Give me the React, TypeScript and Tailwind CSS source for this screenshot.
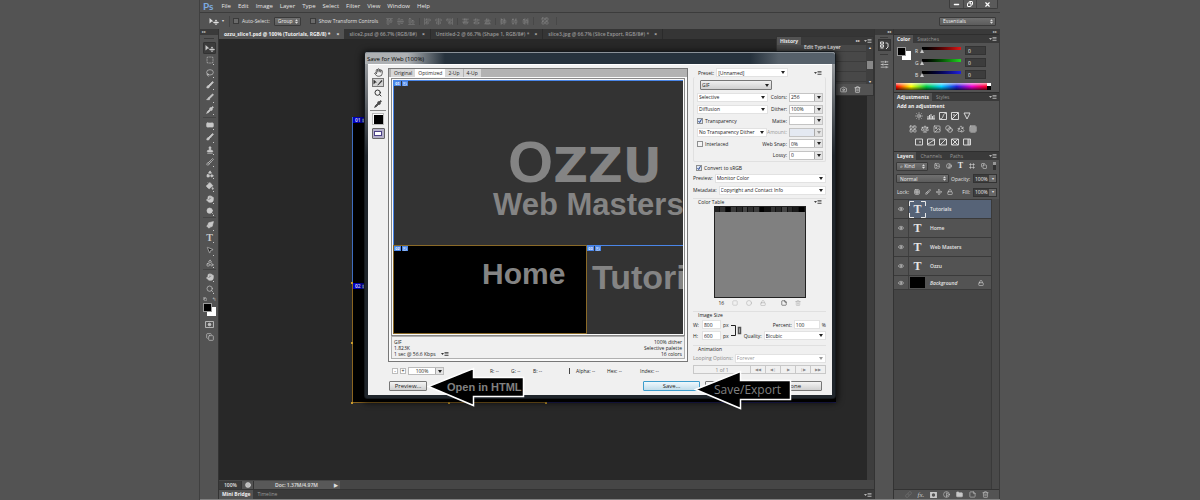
import type { ReactNode } from "react";
import type { LucideIcon } from "lucide-react";
import {
  AlignCenterHorizontal,
  AlignCenterVertical,
  AlignEndHorizontal,
  AlignEndVertical,
  AlignHorizontalDistributeCenter,
  AlignHorizontalDistributeEnd,
  AlignHorizontalDistributeStart,
  AlignStartHorizontal,
  AlignStartVertical,
  AlignVerticalDistributeCenter,
  AlignVerticalDistributeEnd,
  AlignVerticalDistributeStart,
  Bandage,
  Blend,
  Brush,
  Camera,
  Circle,
  Contrast,
  Copy,
  Eye,
  Folder,
  Frame,
  Grid3x3,
  Hand,
  Image,
  LayoutGrid,
  Lasso,
  Link,
  Lock,
  Minus,
  MousePointer2,
  Move,
  PaintBucket,
  PenTool,
  Pipette,
  Recycle,
  Scale,
  Search,
  Shapes,
  SlidersHorizontal,
  Slice,
  SquareDashed,
  Stamp,
  StickyNote,
  Sun,
  Trash2,
  X,
} from "lucide-react";

const menus = ["File", "Edit", "Image", "Layer", "Type", "Select", "Filter", "View", "Window", "Help"];

const documents = [
  "slice2.psd @ 66.7% (RGB/8#)",
  "Untitled-2 @ 66.7% (Shape 1, RGB/8#) *",
  "slice3.jpg @ 66.7% (Slice Export, RGB/8#) *",
];

const alignGroups: LucideIcon[][] = [
  [AlignStartHorizontal, AlignCenterHorizontal, AlignEndHorizontal],
  [AlignStartVertical, AlignCenterVertical, AlignEndVertical],
  [AlignVerticalDistributeStart, AlignVerticalDistributeCenter, AlignVerticalDistributeEnd],
  [AlignHorizontalDistributeStart, AlignHorizontalDistributeCenter, AlignHorizontalDistributeEnd],
];

const colorAdjustments: LucideIcon[] = [LayoutGrid, Scale, Image, Blend, Recycle, Grid3x3];

const layers = ["Tutorials", "Home", "Web Masters", "Ozzu"];

const swatches = [
  "#222", "#333", "#050505", "#3a3a3a", "#2a2a2a", "#444", "#303030", "#3c3c3c",
  "#000", "#111", "#333", "#282828", "#444", "#2c2c2c", "#1a1a1a", "#000",
];

function MenuGlyph({ className = "text-[#b5b5b5]" }: { className?: string }) {
  return (
    <svg viewBox="0 0 8 6" className={`h-[6px] w-[8px] shrink-0 ${className}`} fill="currentColor">
      <path d="M0 2h3L1.500 4zM3.500 1h4v.7h-4zM3.500 2.500h4v.7h-4zM3.500 4h4v.7h-4z" />
    </svg>
  );
}

function MoveGlyph() {
  return (
    <svg viewBox="0 0 20 14" className="h-[7px] w-[10px]" fill="currentColor">
      <path d="M1 0l8 7H5.500L1 11z" />
      <path d="M14 3l2.500 3H15v2h2V6.500L20 9l-3 2.500V10h-2v2h1.500L14 14l-2.500-2H13v-2h-2v1.500L8 9l3-2.500V8h2V6h-1.500z" />
    </svg>
  );
}

function Tool({ label, children }: { label: string; children: ReactNode }) {
  return (
    <button aria-label={label} className="relative flex flex-1 items-center justify-center">
      {children}
      <span className="absolute right-[2px] bottom-[1px] size-[1px] bg-[#c8c8c8]" />
    </button>
  );
}

function ToolGroup({ tools, className }: { tools: [string, LucideIcon, boolean?][]; className: string }) {
  return (
    <div className={`flex flex-col ${className}`}>
      {tools.map(([label, Icon, solid]) => (
        <Tool key={label} label={label}>
          <Icon className={`size-[8px] ${solid ? "fill-[#c8c8c8]" : ""}`} strokeWidth={2} />
        </Tool>
      ))}
    </div>
  );
}

function Toolbar() {
  return (
    <aside className="flex w-[19px] shrink-0 flex-col border-r border-[#333] text-[#c8c8c8]">
      <div className="h-[6px] bg-[#3a3a3a] pl-[2px] text-[4px] leading-[5px]">▸▸</div>
      <div className="mx-[4px] my-[3px] h-px bg-[#3a3a3a]" />
      <div className="mr-[2px] ml-[3px] flex flex-col">
        <button aria-label="Move tool" className="flex h-[12px] items-center justify-center rounded-[1px] border border-[#333] bg-[#3c3c3c]">
          <MoveGlyph />
        </button>
        <ToolGroup
          className="h-[62px]"
          tools={[
            ["Marquee tool", SquareDashed],
            ["Lasso tool", Lasso],
            ["Quick selection tool", Brush, true],
            ["Slice tool", Slice, true],
            ["Eyedropper tool", Pipette, true],
          ]}
        />
        <div className="my-px h-px bg-[#444]" />
        <ToolGroup
          className="h-[98px]"
          tools={[
            ["Healing brush tool", Bandage, true],
            ["Brush tool", Brush, true],
            ["Clone stamp tool", Stamp, true],
            ["History brush tool", Brush],
            ["Eraser tool", Shapes, true],
            ["Paint bucket tool", PaintBucket, true],
            ["Smudge tool", Hand, true],
            ["Dodge tool", Search, true],
          ]}
        />
        <div className="mb-px h-px bg-[#444]" />
        <div className="flex h-[50px] flex-col">
          <Tool label="Pen tool">
            <PenTool className="size-[8px] -scale-x-100 fill-[#c8c8c8]" />
          </Tool>
          <Tool label="Type tool">
            <span className="font-['Liberation_Serif',serif] text-[10px] leading-[12px] font-bold">T</span>
          </Tool>
          <Tool label="Path selection tool">
            <MousePointer2 className="size-[8px] fill-[#222]" />
          </Tool>
          <Tool label="Shape tool">
            <Shapes className="size-[8px]" />
          </Tool>
        </div>
        <div className="mb-px h-px bg-[#444]" />
        <ToolGroup
          className="h-[24px]"
          tools={[
            ["Hand tool", Hand, true],
            ["Zoom tool", Search],
          ]}
        />
        <div className="flex h-[7px] items-center justify-between">
          <Copy className="size-[4px]" strokeWidth={3} />
          <span className="text-[5px] leading-[6px]">↰</span>
        </div>
        <div className="grid h-[14px] grid-cols-[4px_5px_4px] grid-rows-[4px_5px_4px] pt-px">
          <span className="z-10 col-span-2 col-start-1 row-span-2 row-start-1 border border-[#999] bg-black" />
          <span className="col-span-2 col-start-2 row-span-2 row-start-2 bg-white" />
        </div>
        <div className="mt-[4px] flex h-[8px] items-center justify-center">
          <svg viewBox="0 0 10 8" className="h-[7px] w-[9px]" fill="none" stroke="currentColor">
            <path d="M.500.500h9v7h-9z" />
            <circle cx="5" cy="4" r="1.500" fill="currentColor" />
          </svg>
        </div>
        <div className="mt-[5px] flex h-[8px] items-center justify-center">
          <Copy className="size-[8px]" />
        </div>
      </div>
    </aside>
  );
}

function MenuBar() {
  return (
    <header className="flex h-[12px] items-center pl-[3px]">
      <span className="mr-[8px] font-[Lato] text-[10px] leading-[12px] font-bold text-[#7cabe0]">Ps</span>
      <nav className="flex gap-[7px] text-[6px] leading-[8px] text-[#e6e6e6]">
        {menus.map((menu) => (
          <button key={menu}>{menu}</button>
        ))}
      </nav>
      <div className="mr-[2px] ml-auto flex h-[9px] self-start rounded-b-[2px] border border-t-0 border-[#3c3c3c] bg-[#5a5a5a] text-white">
        <button aria-label="Minimize" className="flex w-[14px] items-center justify-center border-r border-[#444]">
          <Minus className="size-[7px]" strokeWidth={5} />
        </button>
        <button aria-label="Restore" className="flex w-[13px] items-center justify-center border-r border-[#444]">
          <Copy className="size-[6px] -scale-x-100" strokeWidth={4} />
        </button>
        <button aria-label="Close" className="flex w-[20px] items-center justify-center">
          <X className="size-[7px]" strokeWidth={4} />
        </button>
      </div>
    </header>
  );
}

function DarkSelect({ label, value, className }: { label: string; value: string; className: string }) {
  return (
    <div className={`relative flex items-center rounded-[1px] border border-[#3a3a3a] bg-linear-to-b from-[#707070] to-[#5c5c5c] ${className}`}>
      <select aria-label={label} className="h-full w-full appearance-none pl-[3px] text-[5px] leading-[6px] text-[#f0f0f0]">
        <option>{value}</option>
      </select>
      <svg viewBox="0 0 4 6" className="pointer-events-none absolute right-[2px] h-[5px] w-[3px]" fill="#ddd">
        <path d="M2 0l2 2.500H0zM2 6l2-2.500H0z" />
      </svg>
    </div>
  );
}

function OptionsBar() {
  return (
    <div className="flex h-[17px] items-center border-t border-[#3c3c3c] pr-[4px] pl-[9px] text-[5px] leading-[6px] text-[#e0e0e0]">
      <MoveGlyph />
      <span className="mx-[3px] w-[4px] text-[4px]">▾</span>
      <span className="mr-[3px] h-[11px] w-px bg-[#444]" />
      <label className="mr-[4px] flex items-center gap-[3px]">
        <input type="checkbox" className="size-[6px] appearance-none border border-[#3a3a3a] bg-[#6a6a6a]" />
        Auto-Select:
      </label>
      <DarkSelect label="Auto-Select target" value="Group" className="h-[9px] w-[27px]" />
      <label className="ml-[9px] flex items-center gap-[3px]">
        <input type="checkbox" className="size-[6px] appearance-none border border-[#3a3a3a] bg-[#6a6a6a]" />
        Show Transform Controls
      </label>
      <div className="ml-[4px] flex items-center text-[#858585]">
        {alignGroups.map((icons, group) => (
          <div key={group} className="flex gap-[4px] border-l border-[#484848] px-[4px] first:border-l-0">
            {icons.map((Icon, i) => (
              <Icon key={i} className="size-[7px]" />
            ))}
          </div>
        ))}
        <div className="border-x border-[#484848] px-[7px]">
          <LayoutGrid className="size-[8px]" />
        </div>
      </div>
      <DarkSelect label="Workspace" value="Essentials" className="ml-auto h-[9px] w-[57px]" />
    </div>
  );
}

function DocumentTabs() {
  return (
    <div className="flex h-[10px] bg-[#353535] text-[5px] leading-[10px] whitespace-nowrap text-[#9a9a9a]">
      <button className="flex gap-[6px] bg-[#535353] px-[5px] font-bold text-[#f0f0f0]">
        ozzu_slice1.psd @ 100% (Tutorials, RGB/8) * <span>×</span>
      </button>
      {documents.map((name) => (
        <button key={name} className="flex gap-[5px] border-r border-[#2b2b2b] px-[5px] font-semibold">
          {name} <span className="font-bold text-[#c0c0c0]">×</span>
        </button>
      ))}
    </div>
  );
}

function HistoryPanel() {
  return (
    <section className="absolute top-[7px] right-0 flex h-[60px] w-[98px] flex-col border border-[#333] bg-[#484848] text-[5px] leading-[6px] text-[#e4e4e4]">
      <div className="flex h-[8px] items-center bg-[#3a3a3a] pr-px">
        <h2 className="h-full bg-[#535353] px-[3px] leading-[8px] font-bold">History</h2>
        <span className="mr-[4px] ml-auto text-[4px]">▸▸</span>
        <MenuGlyph />
      </div>
      <div className="flex flex-1">
        <div className="flex-1">
          <p className="-mt-px h-[8px] border-b border-[#3c3c3c] pl-[27px] font-semibold">Edit Type Layer</p>
          <p className="h-[10px] border-b border-[#3c3c3c]" />
          <p className="h-[10px] border-b border-[#3c3c3c]" />
          <p className="h-[10px] border-b border-[#3c3c3c]" />
        </div>
        <div className="flex w-[7px] flex-col items-center justify-between bg-[#3f3f3f] text-[4px] leading-[5px]">
          <span>▴</span>
          <span className="h-[8px] w-[6px] bg-[#888]" />
          <span>▾</span>
        </div>
      </div>
      <div className="flex h-[11px] items-center justify-end gap-[7px] bg-[#535353] pr-[12px]">
        <Camera className="size-[7px]" />
        <Trash2 className="size-[7px]" />
      </div>
    </section>
  );
}

function CanvasDocument() {
  return (
    <div className="absolute top-[78px] left-[133px] h-[286px] w-[484px] bg-black text-[5px] leading-[6px] font-bold text-[#c8c8ff]">
      <div className="h-[166px] border-l border-[#3f6dc0]">
        <span className="block w-[20px] bg-[#0000c0] pl-[2px]">01 ⊠</span>
      </div>
      <div className="relative h-[120px] border-b border-l border-[#8a6420]">
        <span className="block w-[20px] bg-[#0000c0] pl-[2px]">02 ⊠</span>
        <span className="absolute right-0 -bottom-px h-px w-[290px] bg-[#1e1e5a]" />
        <span className="absolute -top-px -left-[2px] size-[2px] bg-[#c99a2c]" />
        <span className="absolute top-[59px] -left-[2px] size-[2px] bg-[#c99a2c]" />
        <span className="absolute -bottom-[2px] -left-[2px] size-[2px] bg-[#c99a2c]" />
        <span className="absolute -bottom-[2px] left-[95px] size-[2px] bg-[#c99a2c]" />
        <span className="absolute -bottom-[2px] left-[192px] size-[2px] bg-[#c99a2c]" />
      </div>
    </div>
  );
}

function Workspace() {
  return (
    <main className="relative flex min-w-0 flex-1 flex-col border-r border-[#333]">
      <DocumentTabs />
      <div className="relative flex flex-1 overflow-hidden bg-[#282828]">
        <CanvasDocument />
        <div className="ml-auto w-[7px] bg-[#3d3d3d]" />
      </div>
      <div className="flex h-[9px] items-center bg-[#464646] text-[5px] leading-[8px] font-semibold text-[#e0e0e0]">
        <span className="w-[22px] bg-[#3a3a3a] pl-[5px]">100%</span>
        <span className="flex w-[12px] justify-center border-l border-[#333] bg-[#535353] py-px">
          <Circle className="size-[6px] fill-[#bbb]" />
        </span>
        <span className="flex w-[87px] justify-between border-l border-[#333] bg-[#585858] pr-[2px] pl-[21px]">
          Doc: 1.37M/4.97M <span>▶</span>
        </span>
      </div>
      <div className="flex h-[10px] items-center border-t border-[#333] bg-[#3a3a3a] pr-[2px] text-[5px] leading-[9px] text-[#9a9a9a]">
        <button className="bg-[#535353] px-[3px] font-bold text-[#f0f0f0]">Mini Bridge</button>
        <button className="px-[4px]">Timeline</button>
        <div className="ml-auto">
          <MenuGlyph />
        </div>
      </div>
      <HistoryPanel />
    </main>
  );
}

function CollapsedPanels() {
  return (
    <aside className="w-[19px] shrink-0 border-r border-[#333] text-[#d8d8d8]">
      <div className="h-[6px] bg-[#3a3a3a] pr-[2px] text-right text-[4px] leading-[5px]">◂◂</div>
      <div className="mx-[5px] mt-[2px] mb-px h-px bg-[#3a3a3a]" />
      <button aria-label="History" className="mx-[3px] flex h-[12px] w-[13px] items-center justify-center border border-[#333] bg-[#3c3c3c]">
        <svg viewBox="0 0 9 9" className="size-[9px]" fill="none" stroke="currentColor">
          <path d="M.500 1h3v2h-3zM.500 4h3v2h-3zM.500 7h3M5.500 2h1.500a1 1 0 011 1v3l-2 2" />
        </svg>
      </button>
      <div className="mx-[5px] my-[3px] h-px bg-[#3a3a3a]" />
      <button aria-label="Properties" className="mx-[3px] flex h-[12px] w-[13px] items-center justify-center">
        <SlidersHorizontal className="size-[9px]" />
      </button>
    </aside>
  );
}

function PanelTabs({ tabs }: { tabs: string[] }) {
  return (
    <div className="flex h-[9px] items-center border-t border-[#2e2e2e] bg-[#3a3a3a] pr-[2px] text-[5px] leading-[8px] text-[#999]">
      {tabs.map((tab, i) => (
        <button key={tab} className={i === 0 ? "bg-[#535353] px-[3px] font-bold text-[#f0f0f0]" : "px-[4px]"}>
          {tab}
        </button>
      ))}
      <div className="ml-auto">
        <MenuGlyph />
      </div>
    </div>
  );
}

function ColorSlider({ name, className }: { name: string; className: string }) {
  return (
    <label className="flex h-[9px] items-center text-[5px] leading-[6px] text-[#e0e0e0]">
      <span className="w-[7px]">{name}</span>
      <span className={`relative mb-[4px] h-[3px] flex-1 bg-linear-to-r from-black ${className}`}>
        <svg viewBox="0 0 4 4" className="absolute top-[2px] -left-[2px] size-[4px]" fill="#c8c8c8">
          <path d="M2 0l2 4H0z" />
        </svg>
      </span>
      <input defaultValue="0" className="ml-[4px] h-[9px] w-[21px] border border-[#333] bg-[#3d3d3d] pl-[2px] text-[#f0f0f0]" />
    </label>
  );
}

function ColorPanel() {
  return (
    <section>
      <PanelTabs tabs={["Color", "Swatches"]} />
      <div className="flex h-[40px] pt-[3px] pr-[13px] pl-[3px]">
        <div className="grid h-[14px] w-[18px] grid-cols-[5px_4px_5px] grid-rows-[4px_5px_4px] pt-px">
          <span className="z-10 col-span-2 col-start-1 row-span-2 row-start-1 border border-[#999] bg-black" />
          <span className="col-span-2 col-start-2 row-span-2 row-start-2 bg-white" />
        </div>
        <div className="flex flex-1 flex-col gap-[3px]">
          <ColorSlider name="R" className="to-[#e01818]" />
          <ColorSlider name="G" className="to-[#20d820]" />
          <ColorSlider name="B" className="to-[#2020e0]" />
        </div>
      </div>
      <div className="mr-[8px] ml-[2px] flex h-[7px]">
        <div className="flex-1 bg-[linear-gradient(to_bottom,#ffffffaa,transparent_50%,#000000aa),linear-gradient(to_right,#f00,#ff0,#0c4,#0cf,#22d,#e0c,#f02)]" />
        <div className="w-[4px] bg-linear-to-b from-white from-50% to-black to-50%" />
      </div>
    </section>
  );
}

function AdjustmentsPanel() {
  return (
    <section className="mt-[2px] h-[59px] text-[#d8d8d8]">
      <PanelTabs tabs={["Adjustments", "Styles"]} />
      <h3 className="mt-[2px] pl-[3px] text-[5px] leading-[7px] font-bold text-[#f0f0f0]">Add an adjustment</h3>
      <div className="mt-[2px] flex flex-col items-center gap-[5px] pr-[8px]">
        <div className="flex gap-[4px]">
          <Sun className="size-[8px]" />
          {["M0 7h8M1 7V4M2.500 7V3M4 7V2M5.500 7V4M7 7V3", "M.500.500h7v7h-7zM1 7c4 0 2-5 6-6", "M.500.500h7v7h-7zM1 7l6-6M2 3h2", "M1 1h6L4 7z"].map((d) => (
            <svg key={d} viewBox="0 0 8 8" className="size-[8px]" fill="none" stroke="currentColor">
              <path d={d} />
            </svg>
          ))}
        </div>
        <div className="flex gap-[4px]">
          {colorAdjustments.map((Icon, i) => (
            <Icon key={i} className="size-[8px]" />
          ))}
        </div>
        <div className="flex gap-[4px]">
          {["M4 4h2", "M1 6l6-4", "M1 7l6-6", "M1 1l6 6M7 1L1 7", "M5 1v6M6 1v6"].map((d) => (
            <svg key={d} viewBox="0 0 8 8" className="size-[8px]" fill="none" stroke="currentColor">
              <path d={`M.500 1h7v6h-7z${d}`} />
            </svg>
          ))}
        </div>
      </div>
    </section>
  );
}

function PercentField({ label }: { label: string }) {
  return (
    <label className="ml-auto flex items-center gap-[3px]">
      {label}
      <span className="flex h-[9px] border border-[#333]">
        <input defaultValue="100%" className="w-[15px] bg-[#3d3d3d] pl-px text-[#f0f0f0]" />
        <span className="flex w-[7px] items-center justify-center bg-[#666] text-[4px]">▾</span>
      </span>
    </label>
  );
}

function LayersPanel() {
  return (
    <section className="flex flex-1 flex-col text-[5px] leading-[6px] text-[#e4e4e4]">
      <PanelTabs tabs={["Layers", "Channels", "Paths"]} />
      <div className="flex h-[12px] items-center gap-[6px] pr-[3px] pl-[2px]">
        <DarkSelect label="Filter type" value="⌕ Kind" className="h-[9px] w-[32px]" />
        <Image className="size-[6px]" />
        <Contrast className="size-[6px]" />
        <span className="font-['Liberation_Serif',serif] text-[8px] leading-[8px] font-bold">T</span>
        <Frame className="size-[6px]" />
        <Copy className="size-[6px]" />
        <span className="ml-auto h-[8px] w-[3px] bg-linear-to-b from-[#999] from-40% to-[#333] to-40%" />
      </div>
      <div className="flex h-[13px] items-center pr-[2px] pl-[2px]">
        <DarkSelect label="Blend mode" value="Normal" className="h-[9px] w-[53px]" />
        <PercentField label="Opacity:" />
      </div>
      <div className="flex h-[14px] items-center gap-[5px] pr-[2px] pl-[3px]">
        Lock:
        <Grid3x3 className="size-[6px]" />
        <Brush className="size-[6px]" />
        <Move className="size-[6px]" />
        <Lock className="size-[6px]" />
        <PercentField label="Fill:" />
      </div>
      <div className="flex flex-1">
        <ul className="flex-1 border-r border-[#3a3a3a] bg-[#454545]">
          {layers.map((name, i) => (
            <li
              key={name}
              className={`flex h-[19px] items-center border-t border-[#3a3a3a] font-semibold ${i === 0 ? "bg-[#566377]" : "bg-[#535353]"}`}
            >
              <span className="flex h-full w-[15px] items-center justify-center border-r border-[#3f3f3f] bg-[#535353]">
                <Eye className="size-[6px]" />
              </span>
              <span className="relative flex h-[17px] w-[17px] items-center justify-center font-['Liberation_Serif',serif] text-[12px] leading-[14px]">
                T
                {i === 0 && (
                  <svg viewBox="0 0 17 17" className="absolute inset-0" fill="none" stroke="#e8e8e8">
                    <path d="M.500 5V.500H5M12 .500h4.500V5M16.500 12v4.500H12M5 16.500H.500V12" />
                  </svg>
                )}
              </span>
              <span className="pl-[4px]">{name}</span>
            </li>
          ))}
          <li className="flex h-[15px] items-center border-y border-[#3a3a3a] bg-[#535353] pr-[7px]">
            <span className="flex h-full w-[15px] items-center justify-center border-r border-[#3f3f3f]">
              <Eye className="size-[6px]" />
            </span>
            <span className="ml-px h-[11px] w-[15px] bg-black" />
            <span className="pl-[5px] font-semibold italic">Background</span>
            <Lock className="ml-auto size-[6px]" />
          </li>
        </ul>
        <div className="w-[7px] bg-[#4a4a4a]" />
      </div>
      <div className="flex h-[10px] items-center justify-center gap-[6px] border-t border-[#333] text-[#c8c8c8]">
        <Link className="size-[7px] text-[#777]" />
        <span className="w-[6px] font-['Liberation_Serif',serif] text-[7px] italic">fx.</span>
        <svg viewBox="0 0 8 7" className="h-[6px] w-[7px]" fill="currentColor" fillRule="evenodd">
          <path d="M0 0h8v7H0zM4 1.500a2 2 0 100 4 2 2 0 000-4z" />
        </svg>
        <Contrast className="size-[7px]" />
        <Folder className="size-[7px] fill-[#c8c8c8]" />
        <StickyNote className="size-[7px]" />
        <Trash2 className="size-[7px]" />
      </div>
    </section>
  );
}

function Caret({ className = "" }: { className?: string }) {
  return (
    <svg viewBox="0 0 4 3" className={`h-[3px] w-[4px] ${className}`} fill="currentColor">
      <path d="M0 0h4L2 3z" />
    </svg>
  );
}

function Dropdown({ label, value, className = "", disabled }: { label: string; value: string; className?: string; disabled?: boolean }) {
  return (
    <div className={`relative flex h-[9px] items-center border border-[#e2e2e2] bg-white ${disabled ? "text-[#999]" : ""} ${className}`}>
      <select aria-label={label} disabled={disabled} className="h-full w-full appearance-none pl-px">
        <option>{value}</option>
      </select>
      <Caret className="pointer-events-none absolute right-[2px]" />
    </div>
  );
}

function Combo({ label, value, disabled }: { label: string; value: string; disabled?: boolean }) {
  return (
    <label className={`ml-auto flex items-center gap-[2px] ${disabled ? "text-[#999]" : ""}`}>
      {label}
      <span className="flex h-[9px] w-[34px] border border-[#c4c4c4]">
        <input defaultValue={value} disabled={disabled} className={`w-0 flex-1 pl-px ${disabled ? "bg-[#e4e9f2]" : "bg-white"}`} />
        <span className="flex w-[8px] items-center justify-center border-l border-[#aaa] bg-[#e4e4e4]">
          <Caret />
        </span>
      </span>
    </label>
  );
}

function Check({ label, checked }: { label: string; checked?: boolean }) {
  return (
    <label className="relative flex items-center gap-[2px]">
      <input
        type="checkbox"
        defaultChecked={checked}
        className="peer size-[6px] appearance-none border border-[#8e8f8f] bg-[#f4f4f4] checked:bg-[#dde6f4]"
      />
      <svg viewBox="0 0 6 6" className="pointer-events-none absolute left-0 hidden size-[6px] peer-checked:block" fill="none" stroke="#24428c">
        <path d="M1.500 3l1.200 1.500L4.500 1.200" />
      </svg>
      {label}
    </label>
  );
}

function SliceBadge({ id }: { id: string }) {
  return (
    <div className="flex gap-px text-[4px] leading-[5px] font-bold text-white">
      <span className="w-[7px] bg-[#4a86e8] text-center">{id}</span>
      <span className="flex w-[6px] items-center justify-center bg-[#4a86e8]">
        <Image className="size-[4px]" />
      </span>
    </div>
  );
}

function Artwork() {
  return (
    <div className="font-['Liberation_Sans',sans-serif] font-bold whitespace-nowrap text-[#848484]">
      <div className="h-[165px] overflow-hidden border-t border-l border-[#4a86e8] bg-[#333]">
        <SliceBadge id="01" />
        <div className="-mr-[20px] flex flex-col pt-[48px]">
          <p className="flex h-[54px] items-baseline pl-[114px] leading-[56px]">
            <span className="text-[58px]">O</span>
            <span className="font-['DejaVu_Sans',sans-serif] text-[48px]">ZZU</span>
          </p>
          <p className="pl-[99px] text-[31px] leading-[34px]">Web Masters</p>
        </div>
      </div>
      <div className="flex h-[89px]">
        <div className="w-[194px] border border-[#8a6a28] bg-black">
          <SliceBadge id="02" />
          <p className="pt-[5px] pl-[88px] text-[30px] leading-[36px]">Home</p>
        </div>
        <div className="flex-1 overflow-hidden border-t border-[#4a86e8] bg-[#333]">
          <SliceBadge id="03" />
          <p className="w-0 pt-[8px] pl-[5px] text-[34px] leading-[36px]">Tutorials</p>
        </div>
      </div>
    </div>
  );
}

function PreviewPane() {
  return (
    <div className="flex w-[300px] shrink-0 flex-col border border-[#777] bg-[#fafafa]">
      <div className="flex h-[8px] items-center bg-[#b2b2b2] pl-[2px] leading-[8px]">
        <button className="bg-[#d8d8d8] px-[3px]">Original</button>
        <button className="bg-white px-[3px]">Optimized</button>
        <button className="border-r border-[#b2b2b2] bg-[#d8d8d8] px-[3px]">2-Up</button>
        <button className="bg-[#d8d8d8] px-[3px]">4-Up</button>
      </div>
      <div className="mx-[2px] mt-px border border-[#888] p-px">
        <Artwork />
      </div>
      <div className="mx-[2px] mb-[2px] flex h-[23px] justify-between border border-[#b0b0b0] bg-[#f0f0f0] px-[2px] pt-[2px] leading-[6px]">
        <div>
          <p>GIF</p>
          <p>1.823K</p>
          <p className="flex items-center gap-[5px]">
            1 sec @ 56.6 Kbps <MenuGlyph className="text-[#333]" />
          </p>
        </div>
        <div className="text-right">
          <p>100% dither</p>
          <p>Selective palette</p>
          <p>16 colors</p>
        </div>
      </div>
    </div>
  );
}

function DialogTools() {
  return (
    <div className="flex w-[20px] shrink-0 flex-col items-center text-[#333]">
      <button aria-label="Hand"><Hand className="size-[9px]" /></button>
      <button aria-label="Slice select" className="mt-px flex h-[9px] w-[12px] items-center justify-center border border-[#777] bg-[#d4d4d4]">
        <svg viewBox="0 0 20 14" className="h-[7px] w-[10px]" fill="currentColor">
          <path d="M1 1l7 6H5L1 11zM8 13L17 2l2 2-8 8z" />
        </svg>
      </button>
      <button aria-label="Zoom" className="mt-[2px]"><Search className="size-[8px]" strokeWidth={3} /></button>
      <button aria-label="Eyedropper" className="mt-[3px]"><Pipette className="size-[8px] fill-[#555]" /></button>
      <div className="mt-[2px] h-px w-[16px] bg-[#888]" />
      <span className="mt-[2px] flex size-[12px] items-center justify-center border border-[#bbb] bg-white">
        <span className="size-[9px] bg-black" />
      </span>
      <button aria-label="Toggle slices" className="mt-[3px] flex h-[11px] w-[13px] items-center justify-center rounded-[1px] border border-[#666] bg-[#b4b0c8]">
        <span className="h-[5px] w-[8px] border border-[#4a3f86] bg-white" />
      </button>
    </div>
  );
}

function ColorTable() {
  return (
    <>
      <div className="mt-[3px] flex h-[7px] items-center justify-between border-t border-[#e0e0e0] pr-[4px] pl-[5px]">
        <h3>Color Table</h3>
        <MenuGlyph className="text-[#444]" />
      </div>
      <div className="mx-auto mt-px h-[92px] w-[92px] border border-[#222] bg-[#808080]">
        <div className="flex h-[5px]">
          {swatches.map((color, i) => (
            <span key={i} className="flex-1 border-r border-[#111]" style={{ backgroundColor: color }} />
          ))}
        </div>
      </div>
      <div className="mx-auto mt-px flex h-[7px] w-[82px] items-center gap-[8px] text-[#aaa]">
        <span className="text-[#222]">16</span>
        <SquareDashed className="size-[6px]" />
        <Circle className="size-[6px]" />
        <Lock className="size-[6px]" />
        <StickyNote className="ml-auto size-[6px] text-[#222]" />
        <Trash2 className="size-[6px]" />
      </div>
    </>
  );
}

function Settings() {
  return (
    <div className="flex min-w-0 flex-1 flex-col pr-[6px] pl-[5px]">
      <div className="flex h-[9px] items-center pr-[4px] pl-[5px]">
        Preset:
        <Dropdown label="Preset" value="[Unnamed]" className="ml-[2px] w-[72px]" />
        <MenuGlyph className="ml-auto text-[#444]" />
      </div>
      <div className="rounded-[2px] border border-t-0 border-[#e0e0e0] pr-[2px] pl-[3px]">
        <div className="relative mt-[3px] ml-[3px] flex h-[10px] w-[72px] items-center rounded-[1px] border border-[#777] bg-linear-to-b from-[#f0f0f0] to-[#d0d0d0]">
          <select aria-label="Format" className="h-full w-full appearance-none pl-px">
            <option>GIF</option>
          </select>
          <Caret className="pointer-events-none absolute right-[2px]" />
        </div>
        <div className="mt-px flex h-[12px] items-center">
          <Dropdown label="Reduction" value="Selective" className="w-[71px]" />
          <Combo label="Colors:" value="256" />
        </div>
        <div className="flex h-[12px] items-center">
          <Dropdown label="Dither method" value="Diffusion" className="w-[71px]" />
          <Combo label="Dither:" value="100%" />
        </div>
        <div className="flex h-[11px] items-center">
          <Check label="Transparency" checked />
          <Combo label="Matte:" value="" />
        </div>
        <div className="flex h-[12px] items-center">
          <Dropdown label="Transparency dither" value="No Transparency Dither" className="w-[71px]" />
          <Combo label="Amount:" value="" disabled />
        </div>
        <div className="flex h-[11px] items-center">
          <Check label="Interlaced" />
          <Combo label="Web Snap:" value="0%" />
        </div>
        <div className="flex h-[12px] items-center">
          <Combo label="Lossy:" value="0" />
        </div>
      </div>
      <div className="flex h-[11px] items-center pl-[3px]">
        <Check label="Convert to sRGB" checked />
      </div>
      <div className="flex h-[10px] items-center gap-[2px]">
        Preview: <Dropdown label="Preview" value="Monitor Color" className="flex-1" />
      </div>
      <div className="mt-[2px] flex h-[10px] items-center gap-[2px]">
        Metadata: <Dropdown label="Metadata" value="Copyright and Contact Info" className="flex-1" />
      </div>
      <ColorTable />
      <div className="mt-[5px] border-t border-[#e0e0e0]">
        <h3 className="pl-[5px] leading-[7px]">Image Size</h3>
      </div>
      <div className="mt-px flex gap-[2px]">
        <div className="flex flex-col gap-[2px]">
          <label className="flex h-[9px] items-center">
            <span className="w-[9px]">W:</span>
            <input defaultValue="800" className="h-[9px] w-[19px] border border-[#e2e2e2] bg-white pl-px" />
            <span className="pl-[2px]">px</span>
          </label>
          <label className="flex h-[9px] items-center">
            <span className="w-[9px]">H:</span>
            <input defaultValue="600" className="h-[9px] w-[19px] border border-[#e2e2e2] bg-white pl-px" />
            <span className="pl-[2px]">px</span>
          </label>
        </div>
        <svg viewBox="0 0 11 20" className="h-[20px] w-[11px]" fill="none" stroke="#222">
          <path d="M0 5.500h4.500v10H0" />
          <path d="M7.500 7.500h2v6h-2z" stroke="#555" strokeWidth="1.500" />
        </svg>
        <div className="flex flex-1 flex-col gap-[2px]">
          <label className="flex h-[9px] items-center justify-end gap-[2px]">
            Percent:
            <input defaultValue="100" className="h-[9px] w-[26px] border border-[#e2e2e2] bg-white pl-px" />
            %
          </label>
          <div className="flex h-[9px] items-center gap-[2px]">
            Quality: <Dropdown label="Quality" value="Bicubic" className="flex-1" />
          </div>
        </div>
      </div>
      <div className="mt-[5px] border-t border-[#e0e0e0]">
        <h3 className="pl-[5px] leading-[7px]">Animation</h3>
      </div>
      <div className="flex h-[10px] items-center gap-[2px] text-[#888]">
        Looping Options: <Dropdown label="Looping options" value="Forever" disabled className="flex-1" />
      </div>
      <div className="mt-[2px] flex h-[9px] items-center border border-[#c8c8c8] text-[#888]">
        <span className="flex-1 text-center">1 of 1</span>
        {["◀◀", "◀|", "▶", "|▶", "▶▶"].map((glyph) => (
          <button key={glyph} disabled className="h-full w-[15px] border-l border-[#c8c8c8] text-[4px]">
            {glyph}
          </button>
        ))}
      </div>
    </div>
  );
}

function ZoomRow() {
  return (
    <div className="flex h-[18px] items-center pl-[24px]">
      <button className="size-[6px] border border-[#bbb] bg-white leading-[4px]">-</button>
      <button className="ml-[2px] size-[6px] border border-[#bbb] bg-white leading-[4px]">+</button>
      <span className="ml-[2px] flex h-[8px] w-[36px] border border-[#bbb]">
        <input aria-label="Zoom level" defaultValue="100%" className="w-0 flex-1 bg-white text-center" />
        <span className="flex w-[8px] items-center justify-center border-l border-[#aaa] bg-[#e4e4e4]">
          <Caret />
        </span>
      </span>
      <span className="ml-[46px] w-[21px]">R: --</span>
      <span className="w-[22px]">G: --</span>
      <span className="w-[36px]">B: --</span>
      <span className="w-[7px] border-l border-[#444]">&nbsp;</span>
      <span className="w-[31px]">Alpha: --</span>
      <span className="w-[33px]">Hex: --</span>
      <span>Index: --</span>
    </div>
  );
}

function CalloutArrow({ text, className, textClassName }: { text: string; className: string; textClassName: string }) {
  return (
    <div className={`absolute h-[40px] w-[98px] ${className}`}>
      <svg viewBox="0 0 98 40" className="absolute inset-0" fill="#000" stroke="#fff" strokeWidth="1.500">
        <path d="M1.500 19.500L46.500 1.500V10.500H96.500V29.500H46.500V38.500z" />
      </svg>
      <p className={`relative pl-[20px] whitespace-nowrap text-[#808080] ${textClassName}`}>{text}</p>
    </div>
  );
}

function SaveForWebDialog() {
  return (
    <div
      role="dialog"
      aria-label="Save for Web"
      className="absolute top-[51px] left-1/2 w-[472px] -translate-x-1/2 rounded-[3px] border border-[#15191d] bg-linear-to-b from-[#a8abae] to-[#20262c] to-30% px-[3px] pb-[3px] text-[5px] leading-[6px] text-[#222] shadow-[0_2px_6px_2px_#000000b0]"
    >
      <div className="-mx-[3px] flex h-[12px] items-center rounded-t-[3px] border-t border-[#8a9198] bg-[linear-gradient(to_right,#adb0b3_9%,#26323d_17%,#26323d_82%,#56606a_88%,#56606a)] px-[2px] text-[6px] leading-[8px] text-black">
        Save for Web (100%)
      </div>
      <div className="border-t border-white bg-[#f0f0f0] pt-[3px]">
        <div className="flex">
          <div className="shrink-0">
            <div className="flex">
              <DialogTools />
              <PreviewPane />
            </div>
            <ZoomRow />
          </div>
          <Settings />
        </div>
        <div className="flex h-[15px] items-start pt-px pr-[10px] pl-[21px] text-[6px] leading-[8px]">
          <button className="h-[10px] w-[38px] rounded-[1px] border border-[#777] bg-linear-to-b from-[#f4f4f4] to-[#d0d0d0]">Preview...</button>
          <button className="ml-auto h-[10px] w-[57px] rounded-[1px] border border-[#3c9ccc] bg-linear-to-b from-[#eef8fd] to-[#c0dcea]">Save...</button>
          <button aria-label="Cancel" className="ml-[5px] h-[10px] w-[56px] rounded-[1px] border border-[#777] bg-linear-to-b from-[#f4f4f4] to-[#d0d0d0]" />
          <button className="ml-[4px] h-[10px] w-[57px] rounded-[1px] border border-[#777] bg-linear-to-b from-[#f4f4f4] to-[#d0d0d0]">Done</button>
        </div>
      </div>
      <CalloutArrow text="Open in HTML" className="top-[315px] left-[62px]" textClassName="font-['Liberation_Sans',sans-serif] text-[11px] leading-[40px] font-bold" />
      <CalloutArrow text="Save/Export" className="top-[318px] left-[329px]" textClassName="text-[12px] leading-[40px]" />
    </div>
  );
}

export default function App() {
  return (
    <div className="min-h-screen bg-[#535353] font-['Open_Sans',sans-serif]">
      <div className="relative mx-auto flex min-h-screen w-2/3 flex-col border-b border-[#808080] shadow-[-1px_0_0_#404040]">
        <MenuBar />
        <OptionsBar />
        <div className="flex flex-1">
          <Toolbar />
          <Workspace />
          <CollapsedPanels />
          <aside className="flex w-[106px] shrink-0 flex-col border-r border-[#3a3a3a]">
            <div className="h-[5px] bg-[#3a3a3a] pr-[2px] text-right text-[4px] leading-[5px] text-[#c8c8c8]">▸▸</div>
            <ColorPanel />
            <AdjustmentsPanel />
            <LayersPanel />
          </aside>
        </div>
        <SaveForWebDialog />
      </div>
    </div>
  );
}
